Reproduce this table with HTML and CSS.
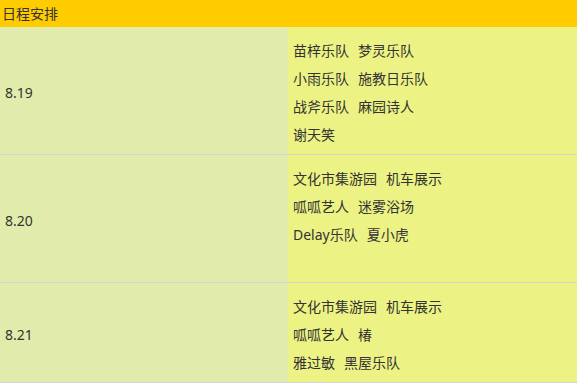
FILE: index.html
```html
<!DOCTYPE html>
<html lang="zh">

<head>
    <meta charset="UTF-8">
    <meta name="viewport" content="width=device-width, initial-scale=1.0">
    <title>日程安排</title>
    <link rel="stylesheet" href="styles.css">
</head>

<body>
    <div class="schedule">
        <div class="schedule_title">日程安排</div>

        <div class="schedule_row">
            <div class="schedule_date">8.19</div>
            <div class="schedule_acts">
                <div class="schedule_line"><span>苗梓乐队</span><span>梦灵乐队</span></div>
                <div class="schedule_line"><span>小雨乐队</span><span>施教日乐队</span></div>
                <div class="schedule_line"><span>战斧乐队</span><span>麻园诗人</span></div>
                <div class="schedule_line"><span>谢天笑</span></div>
            </div>
        </div>

        <div class="schedule_row">
            <div class="schedule_date">8.20</div>
            <div class="schedule_acts">
                <div class="schedule_line"><span>文化市集游园</span><span>机车展示</span></div>
                <div class="schedule_line"><span>呱呱艺人</span><span>迷雾浴场</span></div>
                <div class="schedule_line"><span>Delay乐队</span><span>夏小虎</span></div>
                <div class="schedule_line"></div>
            </div>
        </div>

        <div class="schedule_row">
            <div class="schedule_date">8.21</div>
            <div class="schedule_acts">
                <div class="schedule_line"><span>文化市集游园</span><span>机车展示</span></div>
                <div class="schedule_line"><span>呱呱艺人</span><span>椿</span></div>
                <div class="schedule_line"><span>雅过敏</span><span>黑屋乐队</span></div>
            </div>
        </div>
    </div>
</body>

</html>
```

FILE: styles.css
```css
* {
    box-sizing: border-box;
}

body {
    margin: 0;
    font-family: "Noto Sans", "Noto Sans CJK SC", sans-serif;
    font-size: 14px;
    color: #333;
    background-color: #fff;
}

.schedule_title {
    height: 27px;
    line-height: 27px;
    padding-left: 2px;
    background-color: #ffcc00;
}

.schedule_row {
    display: grid;
    grid-template-columns: 288px 1fr;
    border-bottom: 1px solid #d3d3d3;
}

.schedule_date {
    display: flex;
    align-items: center;
    padding: 3px 0 0 5px;
    background-color: #e1ecac;
}

.schedule_acts {
    padding: 10px 5px 5px 5px;
    background-color: #ecf283;
}

.schedule_line {
    height: 28px;
    line-height: 28px;
    display: flex;
    gap: 9px;
}
```
